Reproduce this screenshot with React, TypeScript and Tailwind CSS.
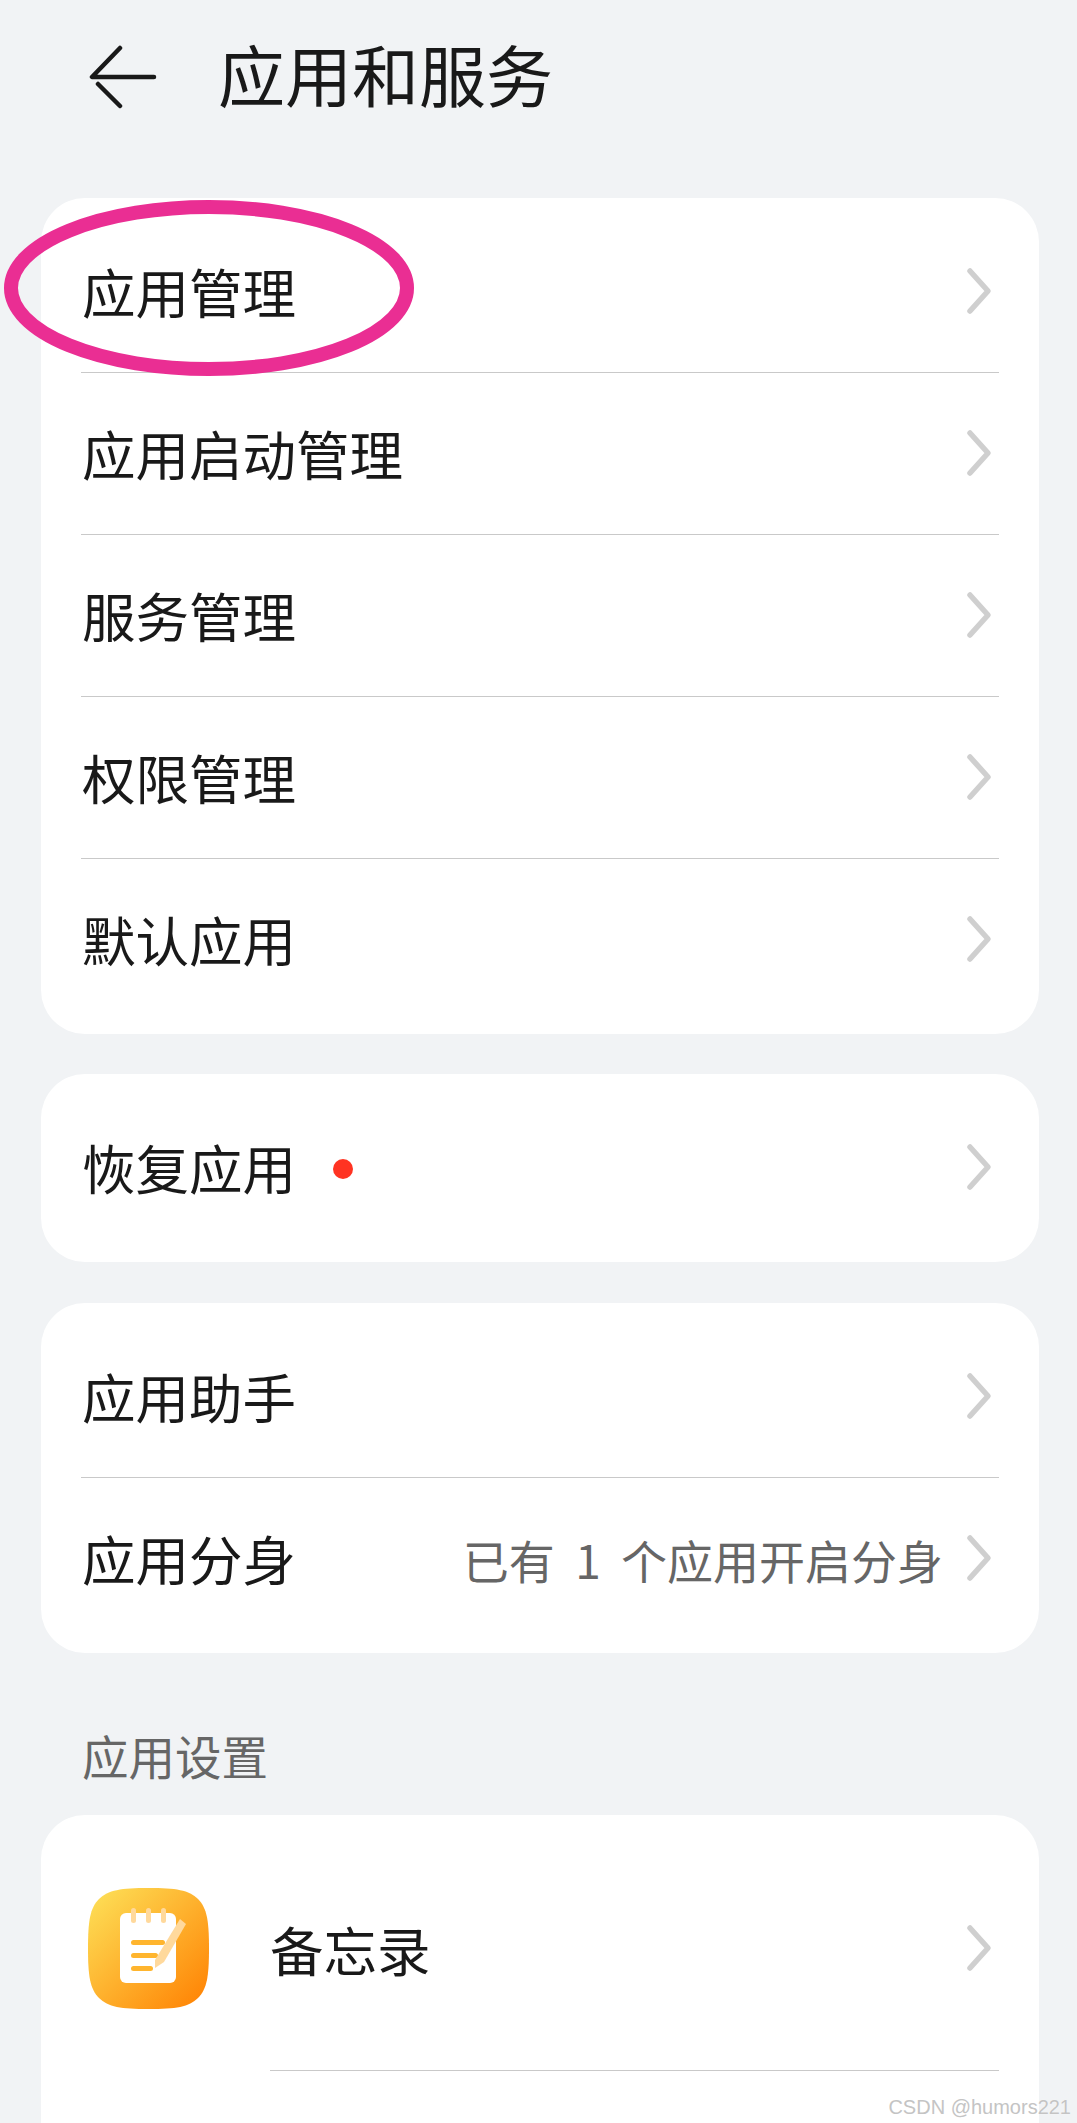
import React from "react";

const FONT = '"Noto Sans CJK SC", "Noto Sans", sans-serif';

function Chevron() {
  return (
    <svg width="32" height="50" viewBox="0 0 32 50" fill="none" className="shrink-0 -translate-y-px">
      <path d="M6 5 L24 25 L6 45" stroke="#cfcfcf" strokeWidth="5.5" strokeLinecap="round" strokeLinejoin="round" />
    </svg>
  );
}

function Row({ label, value, dot, last }: { label: string; value?: string; dot?: boolean; last?: boolean }) {
  return (
    <div className={`flex h-[162px] items-center pr-[3px] ${last ? "" : "border-b border-[#c9c9c9]"}`}>
      <span className="-mt-[2px] ml-[1px] text-[53.5px] font-normal leading-none text-[#191919]">{label}</span>
      {dot && <span className="ml-[37px] mt-[1px] h-5 w-5 rounded-full bg-[#ff3322]" />}
      <span className="flex-1" />
      {value && (
        <span className="mr-[21px] text-[46px] font-normal leading-none text-[#666666] [word-spacing:10px]">{value}</span>
      )}
      <Chevron />
    </div>
  );
}

function Card({ children }: { children: React.ReactNode }) {
  return <div className="rounded-[44px] bg-white px-[40px] py-[13px]">{children}</div>;
}

function NotesIcon() {
  return (
    <svg width="121" height="121" viewBox="0 0 121 121" className="shrink-0">
      <defs>
        <linearGradient id="notes" x1="0" y1="0" x2="1" y2="1">
          <stop offset="0" stopColor="#fde35a" />
          <stop offset="1" stopColor="#ff7f00" />
        </linearGradient>
      </defs>
      <path d="M60.5 0 C88 0 101 2 110 11 C119 20 121 33 121 60.5 C121 88 119 101 110 110 C101 119 88 121 60.5 121 C33 121 20 119 11 110 C2 101 0 88 0 60.5 C0 33 2 20 11 11 C20 2 33 0 60.5 0 Z" fill="url(#notes)" />
      <rect x="32" y="25" width="56" height="70" rx="6" fill="#ffffff" />
      <rect x="43" y="20" width="5" height="15" rx="2.5" fill="#ffd99c" />
      <rect x="58" y="20" width="5" height="15" rx="2.5" fill="#ffd99c" />
      <rect x="73" y="20" width="5" height="15" rx="2.5" fill="#ffd99c" />
      <rect x="43" y="52" width="34" height="5" rx="2.5" fill="#ffb52e" />
      <rect x="43" y="65" width="27" height="5" rx="2.5" fill="#ffb52e" />
      <rect x="43" y="78" width="22" height="5" rx="2.5" fill="#ffb52e" />
      <path d="M92 31 L98 36 L76 74 L67 80 L67 72 Z" fill="#ffd99c" />
    </svg>
  );
}

export default function App() {
  return (
    <div className="relative h-[2123px] w-[1077px] overflow-hidden bg-[#f1f3f5]" style={{ fontFamily: FONT }}>
      <header className="flex h-[198px] items-start pl-[89px] pt-[43px]">
        <svg width="68" height="64" viewBox="0 0 68 64" fill="none" className="mt-[2px] shrink-0">
          <path d="M31 3 L3 32 H65 M9 39 L31 61" stroke="#191919" strokeWidth="4.5" strokeLinecap="round" strokeLinejoin="round" />
        </svg>
        <h1 className="-mt-[6px] ml-[61px] text-[67px] font-normal leading-[72px] text-[#191919]">应用和服务</h1>
      </header>

      <main className="flex flex-col px-[41px] pr-[38px]">
        <Card>
          <Row label="应用管理" />
          <Row label="应用启动管理" />
          <Row label="服务管理" />
          <Row label="权限管理" />
          <Row label="默认应用" last />
        </Card>
        <div className="mt-[40px]">
          <Card>
            <Row label="恢复应用" dot last />
          </Card>
        </div>
        <div className="mt-[41px]">
          <Card>
            <Row label="应用助手" />
            <Row label="应用分身" value="已有 1 个应用开启分身" last />
          </Card>
        </div>
        <div className="mt-[72px] pl-[41px] text-[46.5px] font-normal leading-[60px] text-[#666666]">应用设置</div>
        <div className="mt-[30px] h-[400px] rounded-[44px] bg-white px-[40px] pt-[13px]">
          <div className="relative ml-[189px] flex h-[243px] items-center border-b border-[#c9c9c9] pr-[3px]">
            <div className="absolute left-[-182px] top-[60px]">
              <NotesIcon />
            </div>
            <span className="text-[53.5px] font-normal leading-none text-[#191919]">备忘录</span>
            <span className="flex-1" />
            <Chevron />
          </div>
        </div>
      </main>

      <svg width="430" height="190" viewBox="0 0 430 190" fill="none" className="absolute left-0 top-[195px]">
        <ellipse cx="209" cy="93" rx="198" ry="81" stroke="#ea2e93" strokeWidth="14" />
      </svg>

      <div
        className="absolute bottom-[6px] right-[6px] text-[20px] leading-none text-[#c4c4c4]"
        style={{ fontFamily: '"Liberation Sans", sans-serif', textShadow: "0 0 1px #ffffff" }}
      >
        CSDN @humors221
      </div>
    </div>
  );
}
